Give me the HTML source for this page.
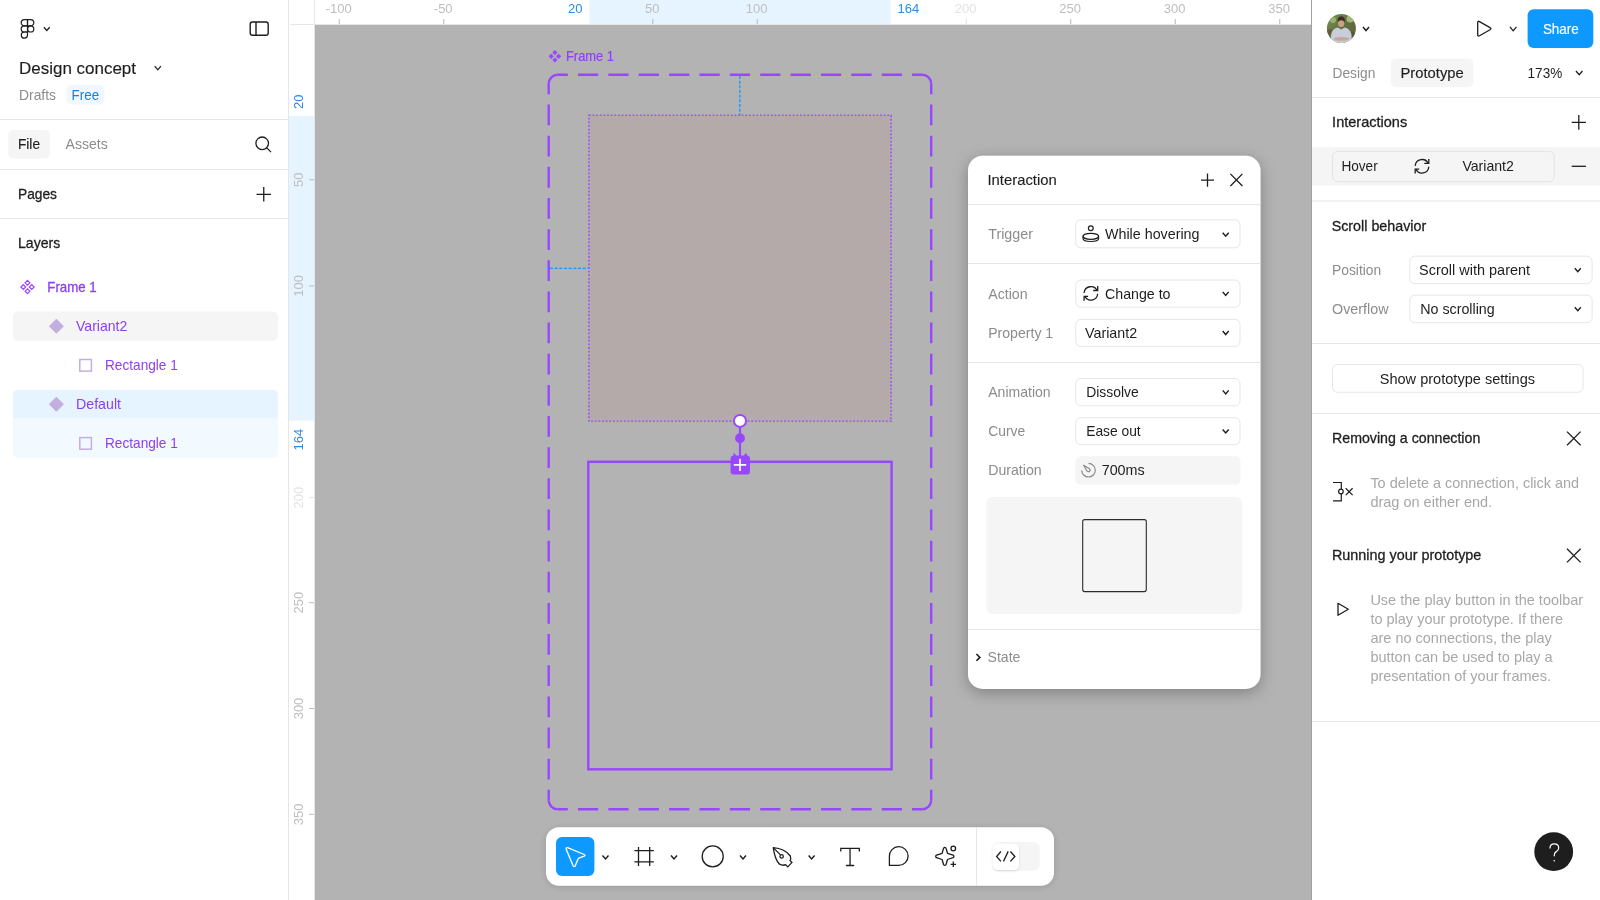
<!DOCTYPE html><html><head><meta charset="utf-8"><style>html,body{margin:0;padding:0;width:1600px;height:900px;overflow:hidden;background:#fff} svg{display:block;will-change:transform} text{font-family:"Liberation Sans", sans-serif;white-space:pre}</style></head><body>
<svg width="1600" height="900" viewBox="0 0 1600 900">
<defs><filter id="shadow" x="-20%" y="-20%" width="140%" height="140%"><feDropShadow dx="0" dy="4" stdDeviation="8" flood-color="#000" flood-opacity="0.28"/></filter><filter id="shadow2" x="-20%" y="-40%" width="140%" height="180%"><feDropShadow dx="0" dy="1" stdDeviation="3" flood-color="#000" flood-opacity="0.15"/></filter><filter id="ksh" x="-50%" y="-50%" width="200%" height="200%"><feDropShadow dx="0" dy="1" stdDeviation="1.2" flood-color="#000" flood-opacity="0.15"/></filter></defs>
<rect x="0" y="0" width="1600" height="900" fill="#fff"/>
<rect x="314.5" y="24.5" width="996.5" height="876" fill="#b3b3b3"/>
<rect x="288" y="0" width="1" height="900" fill="#e6e6e6"/>
<rect x="1311" y="0" width="1" height="900" fill="#a0a0a0"/>
<rect x="289" y="0" width="1022" height="24" fill="#fff"/>
<rect x="589.5" y="0" width="301" height="24" fill="#e5f4ff"/>
<rect x="290" y="24" width="1021" height="1" fill="#e6e6e6"/>
<rect x="289" y="25" width="25" height="875" fill="#fff"/>
<rect x="289" y="116" width="25" height="304.7" fill="#e5f4ff"/>
<rect x="314" y="0" width="1" height="900" fill="#e6e6e6"/>
<rect x="338.7" y="19" width="1.1" height="5" fill="#bebebe"/>
<text x="338.7" y="12.9" font-size="13" fill="#bebebe" text-anchor="middle" >-100</text>
<rect x="443.2" y="19" width="1.1" height="5" fill="#bebebe"/>
<text x="443.2" y="12.9" font-size="13" fill="#bebebe" text-anchor="middle" >-50</text>
<rect x="652.2" y="19" width="1.1" height="5" fill="#bebebe"/>
<text x="652.2" y="12.9" font-size="13" fill="#bebebe" text-anchor="middle" >50</text>
<rect x="756.7" y="19" width="1.1" height="5" fill="#bebebe"/>
<text x="756.7" y="12.9" font-size="13" fill="#bebebe" text-anchor="middle" >100</text>
<rect x="965.7" y="19" width="1.1" height="5" fill="#e3e3e3"/>
<text x="965.7" y="12.9" font-size="13" fill="#e3e3e3" text-anchor="middle" >200</text>
<rect x="1070.2" y="19" width="1.1" height="5" fill="#bebebe"/>
<text x="1070.2" y="12.9" font-size="13" fill="#bebebe" text-anchor="middle" >250</text>
<rect x="1174.7" y="19" width="1.1" height="5" fill="#bebebe"/>
<text x="1174.7" y="12.9" font-size="13" fill="#bebebe" text-anchor="middle" >300</text>
<rect x="1279.2" y="19" width="1.1" height="5" fill="#bebebe"/>
<text x="1279.2" y="12.9" font-size="13" fill="#bebebe" text-anchor="middle" >350</text>
<text x="582.5" y="12.9" font-size="13" fill="#2a8ce6" text-anchor="end" >20</text>
<text x="897.5" y="12.9" font-size="13" fill="#2a8ce6" >164</text>
<rect x="309" y="179.2" width="5" height="1" fill="#bebebe"/>
<text transform="translate(303.3,179.7) rotate(-90)" x="0" y="0" font-size="13" fill="#bebebe" text-anchor="middle">50</text>
<rect x="309" y="285.4" width="5" height="1" fill="#bebebe"/>
<text transform="translate(303.3,285.9) rotate(-90)" x="0" y="0" font-size="13" fill="#bebebe" text-anchor="middle">100</text>
<rect x="309" y="497.1" width="5" height="1" fill="#e3e3e3"/>
<text transform="translate(303.3,497.6) rotate(-90)" x="0" y="0" font-size="13" fill="#e3e3e3" text-anchor="middle">200</text>
<rect x="309" y="602.2" width="5" height="1" fill="#bebebe"/>
<text transform="translate(303.3,602.7) rotate(-90)" x="0" y="0" font-size="13" fill="#bebebe" text-anchor="middle">250</text>
<rect x="309" y="708.0" width="5" height="1" fill="#bebebe"/>
<text transform="translate(303.3,708.5) rotate(-90)" x="0" y="0" font-size="13" fill="#bebebe" text-anchor="middle">300</text>
<rect x="309" y="813.8" width="5" height="1" fill="#bebebe"/>
<text transform="translate(303.3,814.3) rotate(-90)" x="0" y="0" font-size="13" fill="#bebebe" text-anchor="middle">350</text>
<text transform="translate(303.3,116) rotate(-90)" x="7" y="0" font-size="13" fill="#2a8ce6" text-anchor="start">20</text>
<text transform="translate(303.3,420.7) rotate(-90)" x="-8" y="0" font-size="13" fill="#2a8ce6" text-anchor="end">164</text>
<line x1="557.7" y1="74.8" x2="922.2" y2="74.8" stroke="#9747ff" stroke-width="2.4" stroke-dasharray="20.250 10.125" stroke-dashoffset="10.125"/>
<line x1="557.7" y1="809.2" x2="922.2" y2="809.2" stroke="#9747ff" stroke-width="2.4" stroke-dasharray="20.250 10.125" stroke-dashoffset="10.125"/>
<line x1="548.7" y1="83.8" x2="548.7" y2="800.2" stroke="#9747ff" stroke-width="2.4" stroke-dasharray="20.765 10.383" stroke-dashoffset="10.383"/>
<line x1="931.2" y1="83.8" x2="931.2" y2="800.2" stroke="#9747ff" stroke-width="2.4" stroke-dasharray="20.765 10.383" stroke-dashoffset="10.383"/>
<path d="M548.70,83.80 A9,9 0 0 1 557.70,74.80" fill="none" stroke="#9747ff" stroke-width="2.4"/>
<path d="M922.20,74.80 A9,9 0 0 1 931.20,83.80" fill="none" stroke="#9747ff" stroke-width="2.4"/>
<path d="M931.20,800.20 A9,9 0 0 1 922.20,809.20" fill="none" stroke="#9747ff" stroke-width="2.4"/>
<path d="M557.70,809.20 A9,9 0 0 1 548.70,800.20" fill="none" stroke="#9747ff" stroke-width="2.4"/>
<rect x="588.9" y="115.3" width="302.2" height="306" fill="#b4aaaa"/>
<rect x="588.9" y="115.3" width="302.2" height="306" fill="none" stroke="#9a55f2" stroke-width="1.6" stroke-dasharray="1.8 1.84"/>
<line x1="739.8" y1="76" x2="739.8" y2="115" stroke="#0d99ff" stroke-width="1.3" stroke-dasharray="3 1.67"/>
<line x1="550" y1="268.4" x2="588" y2="268.4" stroke="#0d99ff" stroke-width="1.3" stroke-dasharray="3 1.67"/>
<rect x="588.3" y="461.8" width="303.3" height="307.5" fill="none" stroke="#9747ff" stroke-width="2.4"/>
<line x1="740" y1="421" x2="740" y2="458" stroke="#9747ff" stroke-width="2.2"/>
<circle cx="740" cy="438.2" r="4.9" fill="#9747ff"/>
<circle cx="740" cy="420.9" r="6" fill="#fff" stroke="#9747ff" stroke-width="2"/>
<path d="M733.3,453.6 q0.6,-0.6 1.4,0 l1.5,1.9 h7.6 l1.5,-1.9 q0.8,-0.6 1.4,0 l0.2,1.9 q3,0.2 3.1,3 v13 q0,3 -3,3 h-13.4 q-3,0 -3,-3 v-13 q0.1,-2.8 3.1,-3 z" fill="#9747ff"/>
<path d="M733.8,464.9 H746.2 M740,458.7 V471.1" stroke="#fff" stroke-width="1.6"/>
<g fill="#9747ff" transform="translate(554.9,56.3)"><path d="M0,-6.3 L2.6,-3.7 L0,-1.1 L-2.6,-3.7 Z"/><path d="M0,6.3 L2.6,3.7 L0,1.1 L-2.6,3.7 Z"/><path d="M-6.3,0 L-3.7,2.6 L-1.1,0 L-3.7,-2.6 Z"/><path d="M6.3,0 L3.7,2.6 L1.1,0 L3.7,-2.6 Z"/></g>
<text x="566" y="61.2" font-size="14.5" fill="#9040f5" textLength="48" lengthAdjust="spacingAndGlyphs" stroke="#9040f5" stroke-width="0.2" >Frame 1</text>
<rect x="968" y="155.7" width="292.5" height="533.3" rx="15" fill="#fff" filter="url(#shadow)"/>
<text x="987.5" y="185" font-size="14.5" fill="#1e1e1e" textLength="69.2" lengthAdjust="spacingAndGlyphs" stroke="#1e1e1e" stroke-width="0.12" >Interaction</text>
<path d="M1201,180.1 H1214 M1207.5,173.5 V186.7" stroke="#1e1e1e" stroke-width="1.3"/>
<path d="M1230.4,173.9 L1242.4,186 M1242.4,173.9 L1230.4,186" stroke="#1e1e1e" stroke-width="1.3"/>
<rect x="968" y="204" width="292.5" height="1" fill="#e6e6e6"/>
<rect x="968" y="263" width="292.5" height="1" fill="#e6e6e6"/>
<rect x="968" y="362" width="292.5" height="1" fill="#e6e6e6"/>
<rect x="968" y="629" width="292.5" height="1" fill="#e6e6e6"/>
<text x="988.2" y="238.8" font-size="14.5" fill="#8c8c8c" textLength="44.7" lengthAdjust="spacingAndGlyphs" >Trigger</text>
<rect x="1075.8" y="219.8" width="164.20000000000005" height="28.0" rx="5" fill="#fff" stroke="#e6e6e6" stroke-width="1"/>
<path d="M1222.7,232.75 L1225.7,236.25 L1228.7,232.75" fill="none" stroke="#1e1e1e" stroke-width="1.45"/>
<g fill="none" stroke="#1e1e1e" stroke-width="1.2"><circle cx="1090.8" cy="228.2" r="2.4"/><ellipse cx="1090.8" cy="236.3" rx="7.8" ry="3"/><path d="M1083,236.3 v2.2 q0,3 7.8,3 q7.8,0 7.8,-3 v-2.2"/></g>
<text x="1105" y="238.8" font-size="14.5" fill="#1e1e1e" textLength="94.5" lengthAdjust="spacingAndGlyphs" >While hovering</text>
<text x="988.2" y="298.6" font-size="14.5" fill="#8c8c8c" textLength="39.5" lengthAdjust="spacingAndGlyphs" >Action</text>
<rect x="1075.8" y="280.0" width="164.20000000000005" height="27.19999999999999" rx="5" fill="#fff" stroke="#e6e6e6" stroke-width="1"/>
<path d="M1222.7,291.85 L1225.7,295.35 L1228.7,291.85" fill="none" stroke="#1e1e1e" stroke-width="1.45"/>
<g transform="translate(1090.9,293.4) scale(1.0)" fill="none" stroke="#1e1e1e" stroke-width="1.3" stroke-linecap="butt"><path d="M-6.8,-0.4 A6.8,6.8 0 0 1 6.2,-2.7"/><path d="M6.8,0.4 A6.8,6.8 0 0 1 -6.2,2.7"/><path d="M6.8,-7.3 V-2.9 H2.3"/><path d="M-6.8,7.3 V2.9 H-2.8"/></g>
<text x="1105" y="298.6" font-size="14.5" fill="#1e1e1e" textLength="65.5" lengthAdjust="spacingAndGlyphs" >Change to</text>
<text x="988.2" y="337.8" font-size="14.5" fill="#8c8c8c" textLength="65" lengthAdjust="spacingAndGlyphs" >Property 1</text>
<rect x="1075.8" y="319.4" width="164.20000000000005" height="27.0" rx="5" fill="#fff" stroke="#e6e6e6" stroke-width="1"/>
<path d="M1222.7,331.05 L1225.7,334.55 L1228.7,331.05" fill="none" stroke="#1e1e1e" stroke-width="1.45"/>
<text x="1085.1" y="337.8" font-size="14.5" fill="#1e1e1e" textLength="52" lengthAdjust="spacingAndGlyphs" >Variant2</text>
<text x="988.2" y="397" font-size="14.5" fill="#8c8c8c" textLength="62.5" lengthAdjust="spacingAndGlyphs" >Animation</text>
<rect x="1075.8" y="378.5" width="164.20000000000005" height="27.30000000000001" rx="5" fill="#fff" stroke="#e6e6e6" stroke-width="1"/>
<path d="M1222.7,390.35 L1225.7,393.85 L1228.7,390.35" fill="none" stroke="#1e1e1e" stroke-width="1.45"/>
<text x="1086.2" y="397" font-size="14.5" fill="#1e1e1e" textLength="52.5" lengthAdjust="spacingAndGlyphs" >Dissolve</text>
<text x="988.2" y="435.8" font-size="14.5" fill="#8c8c8c" textLength="37" lengthAdjust="spacingAndGlyphs" >Curve</text>
<rect x="1075.8" y="417.7" width="164.20000000000005" height="27.0" rx="5" fill="#fff" stroke="#e6e6e6" stroke-width="1"/>
<path d="M1222.7,429.45 L1225.7,432.95 L1228.7,429.45" fill="none" stroke="#1e1e1e" stroke-width="1.45"/>
<text x="1086.2" y="435.8" font-size="14.5" fill="#1e1e1e" textLength="54.5" lengthAdjust="spacingAndGlyphs" >Ease out</text>
<text x="988.2" y="475.2" font-size="14.5" fill="#8c8c8c" textLength="53.5" lengthAdjust="spacingAndGlyphs" >Duration</text>
<rect x="1075.3" y="456.2" width="165.2" height="28.3" rx="5" fill="#f5f5f5"/>
<g fill="none" stroke="#8c8c8c" stroke-width="1.2"><path d="M1088.5,463.4 A6.8,6.8 0 1 1 1081.7,470.2"/><path d="M1083.6,465.3 L1089.5,468.8 A1.7,1.7 0 1 1 1087.1,471.2 Z" stroke-linejoin="round"/></g>
<text x="1101.7" y="475.2" font-size="14.5" fill="#1e1e1e" textLength="43" lengthAdjust="spacingAndGlyphs" >700ms</text>
<rect x="986.4" y="497.1" width="255.5" height="117" rx="6" fill="#f5f5f5"/>
<rect x="1082.7" y="519.6" width="63.6" height="72" rx="2" fill="#f5f5f5" stroke="#2c2c2c" stroke-width="1.1"/>
<path d="M976.4,654 L979.9,657.4 L976.4,660.8" fill="none" stroke="#1e1e1e" stroke-width="1.6"/>
<text x="987.6" y="662" font-size="14.5" fill="#8c8c8c" textLength="32.8" lengthAdjust="spacingAndGlyphs" >State</text>
<g fill="none" stroke="#1e1e1e" stroke-width="1.2"><path d="M27.5,19.6 H24.3 a3.1,3.1 0 0 0 0,6.2 H27.5 Z"/><path d="M27.5,19.6 H30.7 a3.1,3.1 0 0 1 0,6.2 H27.5 Z"/><path d="M27.5,25.8 H24.3 a3.1,3.1 0 0 0 0,6.2 H27.5 Z"/><circle cx="30.7" cy="28.9" r="3.1"/><path d="M27.5,32 H24.3 a3.1,3.1 0 1 0 3.2,3.1 Z"/></g>
<path d="M43.9,27.299999999999997 L46.8,30.5 L49.699999999999996,27.299999999999997" fill="none" stroke="#1e1e1e" stroke-width="1.3"/>
<g fill="none" stroke="#1e1e1e" stroke-width="1.4"><rect x="250.2" y="22" width="18" height="13.2" rx="2.2"/><line x1="256" y1="22" x2="256" y2="35.2"/></g>
<text x="19" y="73.5" font-size="16.7" fill="#1e1e1e" textLength="117" lengthAdjust="spacingAndGlyphs" stroke="#1e1e1e" stroke-width="0.15" >Design concept</text>
<path d="M154.70000000000002,66.2 L157.8,69.8 L160.9,66.2" fill="none" stroke="#1e1e1e" stroke-width="1.3"/>
<text x="19" y="99.5" font-size="14.5" fill="#8c8c8c" textLength="37" lengthAdjust="spacingAndGlyphs" >Drafts</text>
<rect x="66.5" y="85" width="38" height="19.5" rx="5" fill="#f0f7ff"/>
<text x="71.6" y="99.5" font-size="14.5" fill="#1580e6" textLength="27.5" lengthAdjust="spacingAndGlyphs" >Free</text>
<rect x="0" y="119" width="288" height="1" fill="#e6e6e6"/>
<rect x="8.2" y="130" width="41.6" height="28.6" rx="5" fill="#f5f5f5"/>
<text x="18" y="149.3" font-size="14.5" fill="#1e1e1e" textLength="22" lengthAdjust="spacingAndGlyphs" stroke="#1e1e1e" stroke-width="0.15" >File</text>
<text x="65.6" y="149.3" font-size="14.5" fill="#8c8c8c" textLength="42.2" lengthAdjust="spacingAndGlyphs" >Assets</text>
<g fill="none" stroke="#1e1e1e" stroke-width="1.3"><circle cx="262.2" cy="143.3" r="6.3"/><line x1="266.8" y1="147.9" x2="271" y2="152.1"/></g>
<rect x="0" y="169" width="288" height="1" fill="#e6e6e6"/>
<text x="18" y="199.2" font-size="14.5" fill="#1e1e1e" textLength="39" lengthAdjust="spacingAndGlyphs" stroke="#1e1e1e" stroke-width="0.3" >Pages</text>
<path d="M256.5,194.3 H271 M263.75,187 V201.5" stroke="#1e1e1e" stroke-width="1.3"/>
<rect x="0" y="218" width="288" height="1" fill="#e6e6e6"/>
<text x="18" y="248" font-size="14.5" fill="#1e1e1e" textLength="42.3" lengthAdjust="spacingAndGlyphs" stroke="#1e1e1e" stroke-width="0.3" >Layers</text>
<g fill="none" stroke="#9747ff" stroke-width="1.2" transform="translate(27.5,287)"><path d="M0,-6.6 L2.4,-4.2 L0,-1.8 L-2.4,-4.2 Z"/><path d="M0,6.6 L2.4,4.2 L0,1.8 L-2.4,4.2 Z"/><path d="M-6.6,0 L-4.2,2.4 L-1.8,0 L-4.2,-2.4 Z"/><path d="M6.6,0 L4.2,2.4 L1.8,0 L4.2,-2.4 Z"/></g>
<text x="47.3" y="291.7" font-size="14.5" fill="#8c3ff2" textLength="49.4" lengthAdjust="spacingAndGlyphs" stroke="#8c3ff2" stroke-width="0.3" >Frame 1</text>
<rect x="13" y="311.4" width="265" height="29.3" rx="5" fill="#f5f5f5"/>
<path d="M56.4,319.2 L63.4,326.2 L56.4,333.2 L49.4,326.2 Z" fill="#c3aee0" stroke="#c3aee0" stroke-width="1" stroke-linejoin="round"/>
<text x="76" y="331" font-size="14.5" fill="#8c3ff2" textLength="51.3" lengthAdjust="spacingAndGlyphs" >Variant2</text>
<rect x="79.8" y="359.5" width="11.6" height="11.6" fill="none" stroke="#c3aee0" stroke-width="1.5"/>
<text x="105" y="370" font-size="14.5" fill="#8c3ff2" textLength="72.8" lengthAdjust="spacingAndGlyphs" >Rectangle 1</text>
<path d="M13,395 a5,5 0 0 1 5,-5 h255 a5,5 0 0 1 5,5 v23.8 h-265 z" fill="#e5f4ff"/>
<path d="M13,418.8 h265 v34 a5,5 0 0 1 -5,5 h-255 a5,5 0 0 1 -5,-5 z" fill="#f2f9ff"/>
<path d="M56.4,397.2 L63.4,404.2 L56.4,411.2 L49.4,404.2 Z" fill="#c3aee0" stroke="#c3aee0" stroke-width="1" stroke-linejoin="round"/>
<text x="76" y="409" font-size="14.5" fill="#8c3ff2" textLength="45" lengthAdjust="spacingAndGlyphs" >Default</text>
<rect x="79.8" y="437.6" width="11.6" height="11.6" fill="none" stroke="#c3aee0" stroke-width="1.5"/>
<text x="105" y="448.4" font-size="14.5" fill="#8c3ff2" textLength="72.8" lengthAdjust="spacingAndGlyphs" >Rectangle 1</text>
<defs><linearGradient id="avbg" x1="0" y1="0" x2="1" y2="1"><stop offset="0" stop-color="#7d9455"/><stop offset="0.5" stop-color="#5f7040"/><stop offset="1" stop-color="#6a5c40"/></linearGradient><clipPath id="avc"><circle cx="1341.4" cy="28.6" r="14.5"/></clipPath><filter id="avblur"><feGaussianBlur stdDeviation="0.6"/></filter></defs>
<g clip-path="url(#avc)"><rect x="1326" y="13" width="31" height="31" fill="url(#avbg)"/><g filter="url(#avblur)"><circle cx="1333" cy="20" r="3" fill="#98b070"/><circle cx="1350" cy="19" r="3.5" fill="#a3bb7a"/><circle cx="1330" cy="32" r="3" fill="#6b5a3a"/><circle cx="1352" cy="34" r="2.5" fill="#4e5a38"/><path d="M1330.5,46 L1331.2,34 Q1332.5,28.8 1337.8,27.6 L1341.2,29.5 L1344.6,27.6 Q1350,28.8 1351.4,34 L1352,46 Z" fill="#c8ced9"/><ellipse cx="1341.4" cy="38.8" rx="7.8" ry="1.9" fill="#c9a594"/><ellipse cx="1341.2" cy="23.4" rx="3.1" ry="3.5" fill="#c9a088"/><path d="M1337.6,22.5 Q1337.2,16.3 1341.2,16.2 Q1345.4,16.3 1344.9,22.3 Q1344,20.2 1341.2,20.3 Q1338.5,20.2 1337.6,22.5 Z" fill="#3e2c26"/></g></g>
<path d="M1363.0,27.05 L1366,30.55 L1369.0,27.05" fill="none" stroke="#1e1e1e" stroke-width="1.4"/>
<path d="M1477.7,22.6 Q1477.7,20.6 1479.5,21.6 L1490,27.6 Q1491.8,28.7 1490,29.8 L1479.5,35.8 Q1477.7,36.8 1477.7,34.8 Z" fill="none" stroke="#1e1e1e" stroke-width="1.3" stroke-linejoin="round"/>
<path d="M1509.95,26.8 L1513.2,30.8 L1516.45,26.8" fill="none" stroke="#1e1e1e" stroke-width="1.3"/>
<rect x="1527.6" y="9.2" width="65.7" height="38.9" rx="6" fill="#0d99ff"/>
<text x="1542.9" y="33.5" font-size="14.5" fill="#fff" textLength="35.9" lengthAdjust="spacingAndGlyphs" stroke="#fff" stroke-width="0.15" >Share</text>
<text x="1332.5" y="78" font-size="14.5" fill="#8c8c8c" textLength="42.8" lengthAdjust="spacingAndGlyphs" >Design</text>
<rect x="1390.9" y="58.6" width="82.3" height="28.4" rx="5" fill="#f5f5f5"/>
<text x="1400.5" y="78" font-size="14.5" fill="#1e1e1e" textLength="63.2" lengthAdjust="spacingAndGlyphs" stroke="#1e1e1e" stroke-width="0.15" >Prototype</text>
<text x="1527.6" y="77.9" font-size="14.5" fill="#1e1e1e" textLength="34.6" lengthAdjust="spacingAndGlyphs" >173%</text>
<path d="M1575.95,71.05000000000001 L1579.2,74.75 L1582.45,71.05000000000001" fill="none" stroke="#1e1e1e" stroke-width="1.3"/>
<rect x="1312" y="97" width="288" height="1" fill="#e6e6e6"/>
<text x="1332.1" y="127" font-size="14.5" fill="#1e1e1e" textLength="75.1" lengthAdjust="spacingAndGlyphs" stroke="#1e1e1e" stroke-width="0.3" >Interactions</text>
<path d="M1571.7,122.4 H1585.9 M1578.8,115 V129.8" stroke="#1e1e1e" stroke-width="1.3"/>
<rect x="1312" y="147" width="288" height="38.6" fill="#f5f5f5"/>
<rect x="1332.5" y="151.4" width="221.7" height="30.3" rx="5" fill="#f5f5f5" stroke="#e3e3e3" stroke-width="1"/>
<text x="1341.4" y="171.3" font-size="14.5" fill="#1e1e1e" textLength="36.3" lengthAdjust="spacingAndGlyphs" >Hover</text>
<g transform="translate(1422,166.3) scale(1.0)" fill="none" stroke="#1e1e1e" stroke-width="1.3" stroke-linecap="butt"><path d="M-6.8,-0.4 A6.8,6.8 0 0 1 6.2,-2.7"/><path d="M6.8,0.4 A6.8,6.8 0 0 1 -6.2,2.7"/><path d="M6.8,-7.3 V-2.9 H2.3"/><path d="M-6.8,7.3 V2.9 H-2.8"/></g>
<text x="1462.4" y="171.3" font-size="14.5" fill="#1e1e1e" textLength="51.5" lengthAdjust="spacingAndGlyphs" >Variant2</text>
<path d="M1571.7,166.3 H1585.9" stroke="#1e1e1e" stroke-width="1.3"/>
<rect x="1312" y="200.5" width="288" height="1" fill="#e6e6e6"/>
<text x="1331.7" y="231" font-size="14.5" fill="#1e1e1e" textLength="94.5" lengthAdjust="spacingAndGlyphs" stroke="#1e1e1e" stroke-width="0.3" >Scroll behavior</text>
<text x="1332" y="274.8" font-size="14.5" fill="#8c8c8c" textLength="49.2" lengthAdjust="spacingAndGlyphs" >Position</text>
<rect x="1409.8" y="256.2" width="182.29999999999995" height="27.5" rx="5" fill="#fff" stroke="#e6e6e6" stroke-width="1"/>
<path d="M1574.8,268.35 L1577.8,271.65 L1580.8,268.35" fill="none" stroke="#1e1e1e" stroke-width="1.45"/>
<text x="1419.1" y="274.8" font-size="14.5" fill="#1e1e1e" textLength="111" lengthAdjust="spacingAndGlyphs" >Scroll with parent</text>
<text x="1332" y="314.2" font-size="14.5" fill="#8c8c8c" textLength="56.5" lengthAdjust="spacingAndGlyphs" >Overflow</text>
<rect x="1409.8" y="295.2" width="182.29999999999995" height="27.5" rx="5" fill="#fff" stroke="#e6e6e6" stroke-width="1"/>
<path d="M1574.8,307.35 L1577.8,310.65 L1580.8,307.35" fill="none" stroke="#1e1e1e" stroke-width="1.45"/>
<text x="1420.2" y="314.2" font-size="14.5" fill="#1e1e1e" textLength="74.5" lengthAdjust="spacingAndGlyphs" >No scrolling</text>
<rect x="1312" y="343" width="288" height="1" fill="#e6e6e6"/>
<rect x="1332.5" y="364.5" width="250.5" height="27.8" rx="5" fill="#fff" stroke="#e6e6e6" stroke-width="1"/>
<text x="1379.7" y="383.5" font-size="14.5" fill="#1e1e1e" textLength="155.4" lengthAdjust="spacingAndGlyphs" >Show prototype settings</text>
<rect x="1312" y="413" width="288" height="1" fill="#e6e6e6"/>
<text x="1332" y="442.7" font-size="14.5" fill="#1e1e1e" textLength="148.3" lengthAdjust="spacingAndGlyphs" stroke="#1e1e1e" stroke-width="0.3" >Removing a connection</text>
<path d="M1567,431.6 L1580.6,445.2 M1580.6,431.6 L1567,445.2" stroke="#1e1e1e" stroke-width="1.3"/>
<g fill="none" stroke="#1e1e1e" stroke-width="1.2"><path d="M1333,482.5 H1341.3 V500.8 H1333"/><circle cx="1340.9" cy="491.5" r="2.3" fill="#fff"/><path d="M1345.7,488.3 L1352.6,495.1 M1352.6,488.3 L1345.7,495.1"/></g>
<text x="1370.4" y="487.5" font-size="14.5" fill="#a8a8a8" textLength="208.7" lengthAdjust="spacingAndGlyphs" >To delete a connection, click and</text>
<text x="1370.4" y="507" font-size="14.5" fill="#a8a8a8" >drag on either end.</text>
<text x="1332" y="560.4" font-size="14.5" fill="#1e1e1e" textLength="149.3" lengthAdjust="spacingAndGlyphs" stroke="#1e1e1e" stroke-width="0.3" >Running your prototype</text>
<path d="M1567,548.8 L1580.6,562.4 M1580.6,548.8 L1567,562.4" stroke="#1e1e1e" stroke-width="1.3"/>
<path d="M1338,603.3 L1348.3,609.3 L1338,615.3 Z" fill="none" stroke="#1e1e1e" stroke-width="1.3" stroke-linejoin="round"/>
<text x="1370.4" y="604.5" font-size="14.5" fill="#a8a8a8" >Use the play button in the toolbar</text>
<text x="1370.4" y="623.65" font-size="14.5" fill="#a8a8a8" >to play your prototype. If there</text>
<text x="1370.4" y="642.8" font-size="14.5" fill="#a8a8a8" >are no connections, the play</text>
<text x="1370.4" y="661.95" font-size="14.5" fill="#a8a8a8" >button can be used to play a</text>
<text x="1370.4" y="681.1" font-size="14.5" fill="#a8a8a8" >presentation of your frames.</text>
<rect x="1312" y="721" width="288" height="1" fill="#e6e6e6"/>
<circle cx="1553.7" cy="851.7" r="19.4" fill="#1e1e1e"/>
<g transform="translate(0.6,1.2)"><path d="M1549.3,847.2 q0,-4.6 4.4,-4.6 q4.4,0 4.4,4.2 q0,2.4 -2.4,3.6 q-2,1 -2,3.4 v1.3" fill="none" stroke="#fff" stroke-width="1.2"/><circle cx="1553.7" cy="859.6" r="0.8" fill="#fff"/></g>
<rect x="546" y="827.2" width="508" height="58.6" rx="13" fill="#fff" filter="url(#shadow2)"/>
<rect x="976" y="827.2" width="1" height="58.6" fill="#e6e6e6"/>
<rect x="556" y="836.9" width="38.4" height="39.1" rx="6" fill="#0d99ff"/>
<path d="M567.6,847.7 L584.2,854.5 Q585.8,855.3 584.2,856.1 L578.8,858.1 Q578.2,858.4 578,859 L575.3,865.8 Q574.2,867.3 573.1,865.8 L566.2,849.3 Q565.7,847.2 567.6,847.7 Z" fill="none" stroke="#fff" stroke-width="1.35" stroke-linejoin="round"/>
<path d="M602.5,855.45 L605.5,858.95 L608.5,855.45" fill="none" stroke="#1e1e1e" stroke-width="1.45"/>
<path d="M638.5,846.9 V866 M649.7,846.9 V866 M634.4,850.6 H653.8 M634.4,861.9 H653.8" stroke="#1e1e1e" stroke-width="1.3"/>
<path d="M671.0,855.45 L674,858.95 L677.0,855.45" fill="none" stroke="#1e1e1e" stroke-width="1.45"/>
<circle cx="712.7" cy="856.4" r="10.5" fill="none" stroke="#1e1e1e" stroke-width="1.3"/>
<path d="M740.0,855.45 L743,858.95 L746.0,855.45" fill="none" stroke="#1e1e1e" stroke-width="1.45"/>
<g fill="none" stroke="#1e1e1e" stroke-width="1.3" stroke-linejoin="round"><path d="M773.3,847.6 Q785,848.5 790.3,856 Q791.3,859 790,860.6 L792,862.4 L787.8,866.9 L785.6,864.7 Q783,866 779.5,864.2 Q774.8,859.5 773.3,847.6 Z"/><path d="M773.3,847.6 L780.2,854.6"/><circle cx="781.6" cy="856.4" r="1.7"/></g>
<path d="M808.6,855.45 L811.6,858.95 L814.6,855.45" fill="none" stroke="#1e1e1e" stroke-width="1.45"/>
<path d="M840.8,851.5 V848.4 H859.3 V851.5 M850.05,848.4 V865.5 M845.9,865.5 H854.2" fill="none" stroke="#1e1e1e" stroke-width="1.3"/>
<path d="M889.4,865.4 V856.3 A9.35,9.35 0 1 1 898.75,865.4 Z" fill="none" stroke="#1e1e1e" stroke-width="1.3" stroke-linejoin="round"/>
<g fill="none" stroke="#1e1e1e" stroke-width="1.3" stroke-linejoin="round"><path transform="translate(944.8,856.4)" d="M-2.7,-3.1 L-1.2,-8.3 Q0,-9.8 1.2,-8.3 L2.7,-3.1 L8.3,-1.3 Q9.9,0 8.3,1.3 L2.7,3.1 L1.2,8.3 Q0,9.8 -1.2,8.3 L-2.7,3.1 L-8.3,1.3 Q-9.9,0 -8.3,-1.3 Z"/><circle cx="953.3" cy="848.5" r="2.3"/><path d="M950.6,864.3 H956 M953.3,861.5 V867"/></g>
<rect x="992.6" y="842" width="47.2" height="28.8" rx="6.5" fill="#f5f5f5"/>
<rect x="992.8" y="843.4" width="26.2" height="26.6" rx="5.5" fill="#fff" filter="url(#ksh)"/>
<path d="M1000.9,851.5 L996.6,856.5 L1000.9,861.4 M1010.4,851.5 L1014.9,856.5 L1010.4,861.4 M1008.2,851.4 L1003.5,861.4" fill="none" stroke="#1e1e1e" stroke-width="1.3"/>
</svg></body></html>
